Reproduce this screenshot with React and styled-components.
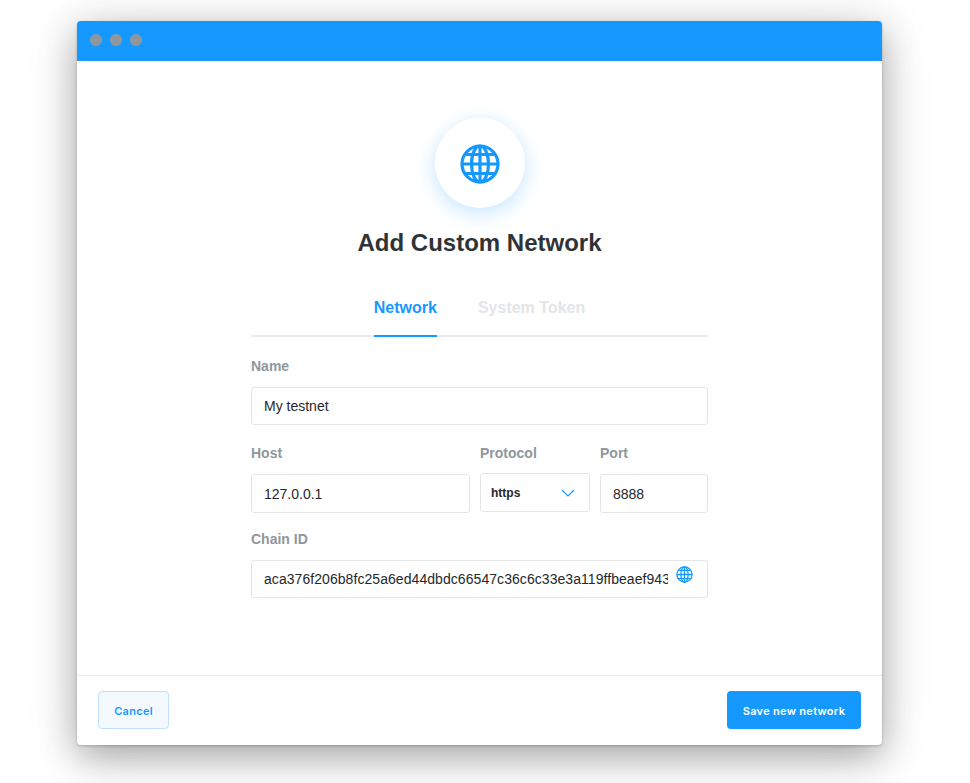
import React from "react";
import styled, { createGlobalStyle } from "styled-components";

const Global = createGlobalStyle`
  html, body { margin: 0; padding: 0; background: #fff; }
  body { font-family: "Liberation Sans", Arial, sans-serif; width: 970px; height: 783px; overflow: hidden; }
  * { box-sizing: border-box; }
`;
const Page = styled.div`
  width: 970px; height: 783px; padding: 21px 88px 38px 77px;
`;
const Window = styled.div`
  width: 805px; height: 724px; background: #fff; border-radius: 4px; overflow: hidden;
  display: flex; flex-direction: column;
  box-shadow: 0 1px 3px rgba(0,0,0,.2), 0 12px 36px rgba(0,0,0,.3), 0 6px 60px rgba(0,0,0,.1);
`;
const TitleBar = styled.div`
  height: 40px; flex: none; background: #1699ff; display: flex; align-items: center; gap: 8px; padding: 0 0 3px 13px;
`;
const Dot = styled.span`
  width: 12px; height: 12px; border-radius: 50%; background: #8f979e;
`;
const Body = styled.div`
  flex: 1; display: flex; flex-direction: column; align-items: center; padding-top: 57px;
`;
const IconCircle = styled.div`
  width: 90px; height: 90px; border-radius: 50%; background: #fff; display: flex; align-items: center; justify-content: center; padding-top: 2px;
  box-shadow: 0 5px 20px rgba(22,153,255,.26);
`;
const Title = styled.h1`
  margin: 20px 0 0; font-size: 24px; line-height: 30px; font-weight: 700; color: #2f3336; text-align: center;
`;
const Tabs = styled.div`
  width: 457px; margin-top: 26px; height: 53px; display: flex; justify-content: center; gap: 41px;
  border-bottom: 2px solid #e9ebec;
`;
const Tab = styled.div`
  height: 53px; padding-top: 14px; font-size: 16px; line-height: 20px; font-weight: 700;
  color: ${p => (p.$active ? "#1699ff" : "#e3e5e7")};
  border-bottom: 2px solid ${p => (p.$active ? "#1699ff" : "transparent")};
`;
const Form = styled.div`
  width: 457px; display: flex; flex-direction: column; padding-top: 19px;
`;
const Row = styled.div`
  display: grid; grid-template-columns: 219px 110px 108px; column-gap: 10px; margin-top: ${p => p.$mt || 0}px;
`;
const Field = styled.div`
  display: flex; flex-direction: column; min-width: 0; margin-top: ${p => p.$mt || 0}px;
`;
const Label = styled.div`
  height: 20px; font-size: 14px; line-height: 20px; font-weight: 700; color: #8f979c; margin-bottom: 11px;
`;
const Input = styled.div`
  height: ${p => p.$h || 38}px; border: 1px solid #e3e5e7; border-radius: 3px; background: #fff;
  padding: 0 12px; display: flex; align-items: center; font-size: 14px; color: #25282b; position: relative;
`;
const Clip = styled.span`
  display: block; width: 404px; overflow: hidden; white-space: nowrap; letter-spacing: .06px;
`;
const GlobeBadge = styled.span`
  position: absolute; right: 14px; top: 5px; display: flex;
`;
const SelectBox = styled(Input)`
  justify-content: space-between; padding: 0 14px 0 10px; font-size: 12px; font-weight: 700; height: 39px; margin-top: -1px;
`;
const Footer = styled.div`
  height: 70px; flex: none; border-top: 1px solid #e8eaeb; display: flex; align-items: flex-start; justify-content: space-between;
  padding: 15px 21px 0;
`;
const Btn = styled.button`
  height: 38px; border-radius: 4px; font-family: Inter, "Liberation Sans", sans-serif; font-size: 11px; font-weight: 600; letter-spacing: .3px; padding: 2px 0 0;
  width: ${p => p.$w}px;
  background: ${p => (p.$primary ? "#1699ff" : "#f3f9ff")};
  color: ${p => (p.$primary ? "#fff" : "#1699ff")};
  border: ${p => (p.$primary ? "none" : "1px solid #bfe0ff")};
`;

const Globe = ({ size, sw }) => (
  <svg width={size} height={size} viewBox="0 0 40 40" fill="none" stroke="#1699ff" strokeWidth={sw}>
    <circle cx="20" cy="20" r="18" />
    <ellipse cx="20" cy="20" rx="8.5" ry="18" />
    <path d="M20 2v36M2 20h36M5 10.5h30M5 29.500h30" />
  </svg>
);

export default function App() {
  return (
    <Page>
      <Global />
      <Window>
        <TitleBar><Dot /><Dot /><Dot /></TitleBar>
        <Body>
          <IconCircle><Globe size={40} sw={3.2} /></IconCircle>
          <Title>Add Custom Network</Title>
          <Tabs>
            <Tab $active>Network</Tab>
            <Tab>System Token</Tab>
          </Tabs>
          <Form>
            <Field>
              <Label>Name</Label>
              <Input>My testnet</Input>
            </Field>
            <Row $mt={18}>
              <Field>
                <Label>Host</Label>
                <Input $h={39}>127.0.0.1</Input>
              </Field>
              <Field>
                <Label>Protocol</Label>
                <SelectBox>
                  https
                  <svg width="14" height="8" viewBox="0 0 14 8" fill="none" stroke="#1699ff" strokeWidth="1.2">
                    <path d="M1 1l6 6 6-6" />
                  </svg>
                </SelectBox>
              </Field>
              <Field>
                <Label>Port</Label>
                <Input $h={39}>8888</Input>
              </Field>
            </Row>
            <Field $mt={16}>
              <Label>Chain ID</Label>
              <Input>
                <Clip>aca376f206b8fc25a6ed44dbdc66547c36c6c33e3a119ffbeaef943</Clip>
                <GlobeBadge><Globe size={17} sw={3} /></GlobeBadge>
              </Input>
            </Field>
          </Form>
        </Body>
        <Footer>
          <Btn $w={71}>Cancel</Btn>
          <Btn $primary $w={134}>Save new network</Btn>
        </Footer>
      </Window>
    </Page>
  );
}
